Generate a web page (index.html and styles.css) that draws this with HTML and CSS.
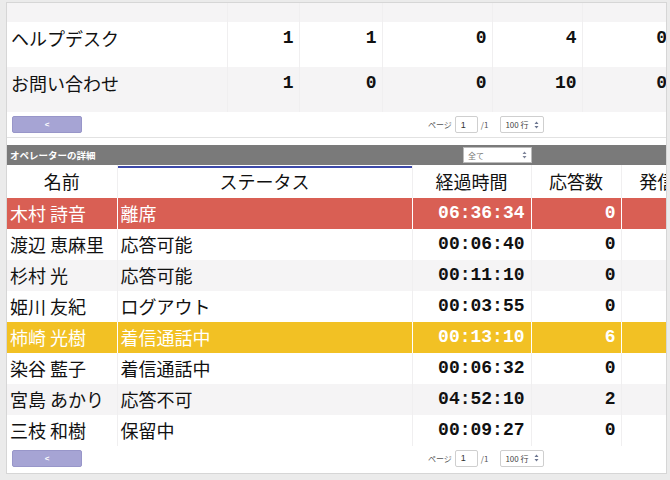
FILE: index.html
```html
<!DOCTYPE html>
<html lang="ja">
<head>
    <meta charset="utf-8">
    <title>コールセンター モニター</title>
    <link rel="stylesheet" href="styles.css">
</head>
<body>
<div class="panel">
    <table class="summary">
        <colgroup>
            <col style="width: 220px">
            <col style="width: 72px">
            <col style="width: 83px">
            <col style="width: 110px">
            <col style="width: 90px">
            <col style="width: 90px">
        </colgroup>
        <tr class="cut"><td></td><td></td><td></td><td></td><td></td><td></td></tr>
        <tr>
            <td class="label">ヘルプデスク</td>
            <td class="num">1</td><td class="num">1</td><td class="num">0</td><td class="num">4</td><td class="num">0</td>
        </tr>
        <tr>
            <td class="label">お問い合わせ</td>
            <td class="num">1</td><td class="num">0</td><td class="num">0</td><td class="num">10</td><td class="num">0</td>
        </tr>
    </table>
    <div class="pager top">
        <button class="page-btn">&lt;</button>
        <div class="page-info">
            <span>ページ</span>
            <input class="page-input" type="text" value="1">
            <span>/1</span>
            <span class="select rows">100 行
                <svg width="5" height="8" viewBox="0 0 5 8"><path d="M2.5 0.5 L4.5 3 H0.5 Z M2.5 7.5 L4.5 5 H0.5 Z" fill="#6b7590"/></svg>
            </span>
        </div>
    </div>

    <div class="op-bar">
        <span class="op-title">オペレーターの詳細</span>
        <span class="select filter">全て
            <svg width="5" height="8" viewBox="0 0 5 8"><path d="M2.5 0.5 L4.5 3 H0.5 Z M2.5 7.5 L4.5 5 H0.5 Z" fill="#7d8499"/></svg>
        </span>
    </div>

    <table class="operators">
        <colgroup>
            <col style="width: 110px">
            <col style="width: 295px">
            <col style="width: 119px">
            <col style="width: 90px">
            <col style="width: 90px">
        </colgroup>
        <thead>
        <tr>
            <th>名前</th>
            <th class="sorted">ステータス</th>
            <th>経過時間</th>
            <th>応答数</th>
            <th>発信数</th>
        </tr>
        </thead>
        <tbody>
        <tr class="away">
            <td>木村 詩音</td><td>離席</td><td class="time">06:36:34</td><td class="num">0</td><td></td>
        </tr>
        <tr>
            <td>渡辺 恵麻里</td><td>応答可能</td><td class="time">00:06:40</td><td class="num">0</td><td></td>
        </tr>
        <tr>
            <td>杉村 光</td><td>応答可能</td><td class="time">00:11:10</td><td class="num">0</td><td></td>
        </tr>
        <tr>
            <td>姫川 友紀</td><td>ログアウト</td><td class="time">00:03:55</td><td class="num">0</td><td></td>
        </tr>
        <tr class="ringing">
            <td>柿崎 光樹</td><td>着信通話中</td><td class="time">00:13:10</td><td class="num">6</td><td></td>
        </tr>
        <tr>
            <td>染谷 藍子</td><td>着信通話中</td><td class="time">00:06:32</td><td class="num">0</td><td></td>
        </tr>
        <tr>
            <td>宮島 あかり</td><td>応答不可</td><td class="time">04:52:10</td><td class="num">2</td><td></td>
        </tr>
        <tr>
            <td>三枝 和樹</td><td>保留中</td><td class="time">00:09:27</td><td class="num">0</td><td></td>
        </tr>
        </tbody>
    </table>
    <div class="pager">
        <button class="page-btn">&lt;</button>
        <div class="page-info">
            <span>ページ</span>
            <input class="page-input" type="text" value="1">
            <span>/1</span>
            <span class="select rows">100 行
                <svg width="5" height="8" viewBox="0 0 5 8"><path d="M2.5 0.5 L4.5 3 H0.5 Z M2.5 7.5 L4.5 5 H0.5 Z" fill="#6b7590"/></svg>
            </span>
        </div>
    </div>
</div>
</body>
</html>
```

FILE: styles.css
```css
body {
    margin: 0;
    background-color: #ebebeb;
    font-family: "Noto Sans CJK JP", "Noto Sans", sans-serif;
    color: #111;
}

.panel {
    margin: 2px 0 0 6px;
    width: 661px;
    height: 472px;
    box-sizing: border-box;
    border: 1px solid #d6d6d6;
    background: #fff;
    overflow: hidden;
}

table {
    border-collapse: collapse;
    table-layout: fixed;
}

.summary {
    width: 665px;
}

.operators {
    width: 704px;
}

td, th {
    padding: 0 5px;
    border-left: 1px solid #f0eff0;
    white-space: nowrap;
    overflow: hidden;
}

td:first-child, th:first-child {
    border-left: none;
}

/* summary table */

.summary tr:nth-child(odd) {
    background: #f5f4f5;
}

.summary td {
    vertical-align: top;
    font-size: 18px;
    line-height: 24px;
    padding-top: 4px;
    padding-bottom: 17px;
}

.summary .cut td {
    height: 19px;
    padding: 0;
}

.summary td.label {
    padding-left: 4px;
}

.num, .time {
    text-align: right;
    font-family: "Liberation Mono", "DejaVu Sans Mono", monospace;
    font-weight: bold;
    font-size: 17.5px;
}

/* pager */

.pager {
    height: 24px;
    display: flex;
    align-items: center;
    gap: 346px;
    padding: 0 5px;
}

.pager.top {
    height: 25px;
    border-bottom: 1px solid #e2e2e2;
    margin-bottom: 7px;
}

.page-btn {
    width: 70px;
    height: 17px;
    padding: 0;
    border: 1px solid #9896c9;
    border-radius: 2px;
    background: #a6a4d4;
    color: #fff;
    font-size: 8px;
    font-weight: bold;
    font-family: "Liberation Sans", sans-serif;
}

.page-info {
    display: flex;
    align-items: center;
    gap: 3px;
    font-size: 8px;
    color: #555;
}

.page-input {
    width: 23px;
    height: 17px;
    box-sizing: border-box;
    border: 1px solid #cfcfcf;
    border-radius: 2px;
    padding: 0 5px;
    font-size: 9px;
    font-family: "Liberation Sans", sans-serif;
    color: #333;
}

.select {
    display: flex;
    align-items: center;
    justify-content: space-between;
    box-sizing: border-box;
    background: #fff;
    border: 1px solid #cfcfcf;
    border-radius: 2px;
    padding: 0 4px;
    color: #444;
}

.select.rows {
    width: 44px;
    height: 17px;
    margin-left: 9px;
}

/* operators */

.op-bar {
    height: 20px;
    display: flex;
    align-items: center;
    background: #7a7a7a;
}

.op-title {
    width: 453px;
    padding-left: 3px;
    color: #fff;
    font-size: 9.5px;
    font-weight: bold;
}

.select.filter {
    width: 69px;
    height: 16px;
    font-size: 8px;
    color: #777;
    border-color: #bbb;
    border-radius: 0;
}

.operators th {
    font-weight: normal;
    font-size: 18px;
    line-height: 33px;
}

.operators th.sorted {
    box-shadow: inset 0 1px 0 #fff, inset 0 3px 0 #3d49a8;
}

.operators td {
    font-size: 18px;
    line-height: 31px;
    padding: 0 5px 0 3px;
}

.operators td.time {
    padding-right: 6px;
}

.operators tbody tr:nth-child(odd) {
    background: #f5f4f5;
}

.operators tr.away {
    background: #d95f54 !important;
    color: #fff;
}

.operators tr.ringing {
    background: #f2c124 !important;
    color: #fff;
}

.operators tr.away td, .operators tr.ringing td {
    border-left-color: transparent;
}
```
